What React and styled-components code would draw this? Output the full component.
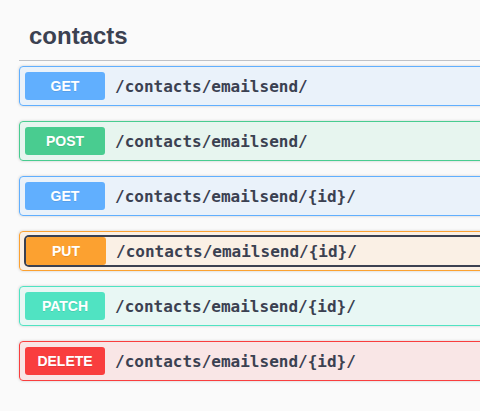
import React from "react";
import styled, { createGlobalStyle } from "styled-components";

const Global = createGlobalStyle`
  html, body { margin: 0; padding: 0; background: #fafafa; overflow: hidden; }
  body { font-family: "Liberation Sans", Arial, sans-serif; }
`;

const COLORS = {
  GET: { main: "#61affe", bg: "rgba(97,175,254,.1)" },
  POST: { main: "#49cc90", bg: "rgba(73,204,144,.1)" },
  PUT: { main: "#fca130", bg: "rgba(252,161,48,.1)" },
  PATCH: { main: "#50e3c2", bg: "rgba(80,227,194,.1)" },
  DELETE: { main: "#f93e3e", bg: "rgba(249,62,62,.1)" },
};

const Page = styled.div`
  width: 1000px;
  padding: 12px 0 0 19px;
`;

const TagTitle = styled.h3`
  margin: 0 0 5px;
  padding: 10px 20px 10px 10px;
  font-size: 24px;
  font-weight: 700;
  color: #3b4151;
  border-bottom: 1px solid rgba(59, 65, 81, 0.3);
  font-family: "Liberation Sans", Arial, sans-serif;
`;

const OpBlock = styled.div`
  margin: 0 0 15px;
  border: 1px solid ${(p) => COLORS[p.$method].main};
  background: ${(p) => COLORS[p.$method].bg};
  border-radius: 4px;
  box-shadow: 0 0 3px rgba(0, 0, 0, 0.19);
`;

const Summary = styled.div`
  padding: 5px;
`;

const SummaryButton = styled.div`
  display: flex;
  align-items: center;
  border-radius: 3px;
  ${(p) =>
    p.$focused &&
    `
    margin-left: 1px;
    box-shadow: 0 0 0 2px #3b4151;
  `}
`;

const Method = styled.span`
  min-width: 80px;
  padding: 6px 0;
  box-sizing: border-box;
  text-align: center;
  font-size: 14px;
  line-height: 16px;
  font-weight: 700;
  color: #fff;
  border-radius: 3px;
  background: ${(p) => COLORS[p.$method].main};
  text-shadow: 0 1px 0 rgba(0, 0, 0, 0.1);
  font-family: "Liberation Sans", Arial, sans-serif;
`;

const Path = styled.span`
  padding: 0 10px;
  font-family: "DejaVu Sans Mono", monospace;
  font-size: 16px;
  font-weight: 600;
  color: #3b4151;
`;

const ops = [
  ["GET", "/contacts/emailsend/"],
  ["POST", "/contacts/emailsend/"],
  ["GET", "/contacts/emailsend/{id}/"],
  ["PUT", "/contacts/emailsend/{id}/", true],
  ["PATCH", "/contacts/emailsend/{id}/"],
  ["DELETE", "/contacts/emailsend/{id}/"],
];

export default function App() {
  return (
    <>
      <Global />
      <Page>
        <TagTitle>contacts</TagTitle>
        {ops.map(([m, p, f], i) => (
          <OpBlock key={i} $method={m}>
            <Summary>
              <SummaryButton $focused={f}>
                <Method $method={m}>{m}</Method>
                <Path>{p}</Path>
              </SummaryButton>
            </Summary>
          </OpBlock>
        ))}
      </Page>
    </>
  );
}
